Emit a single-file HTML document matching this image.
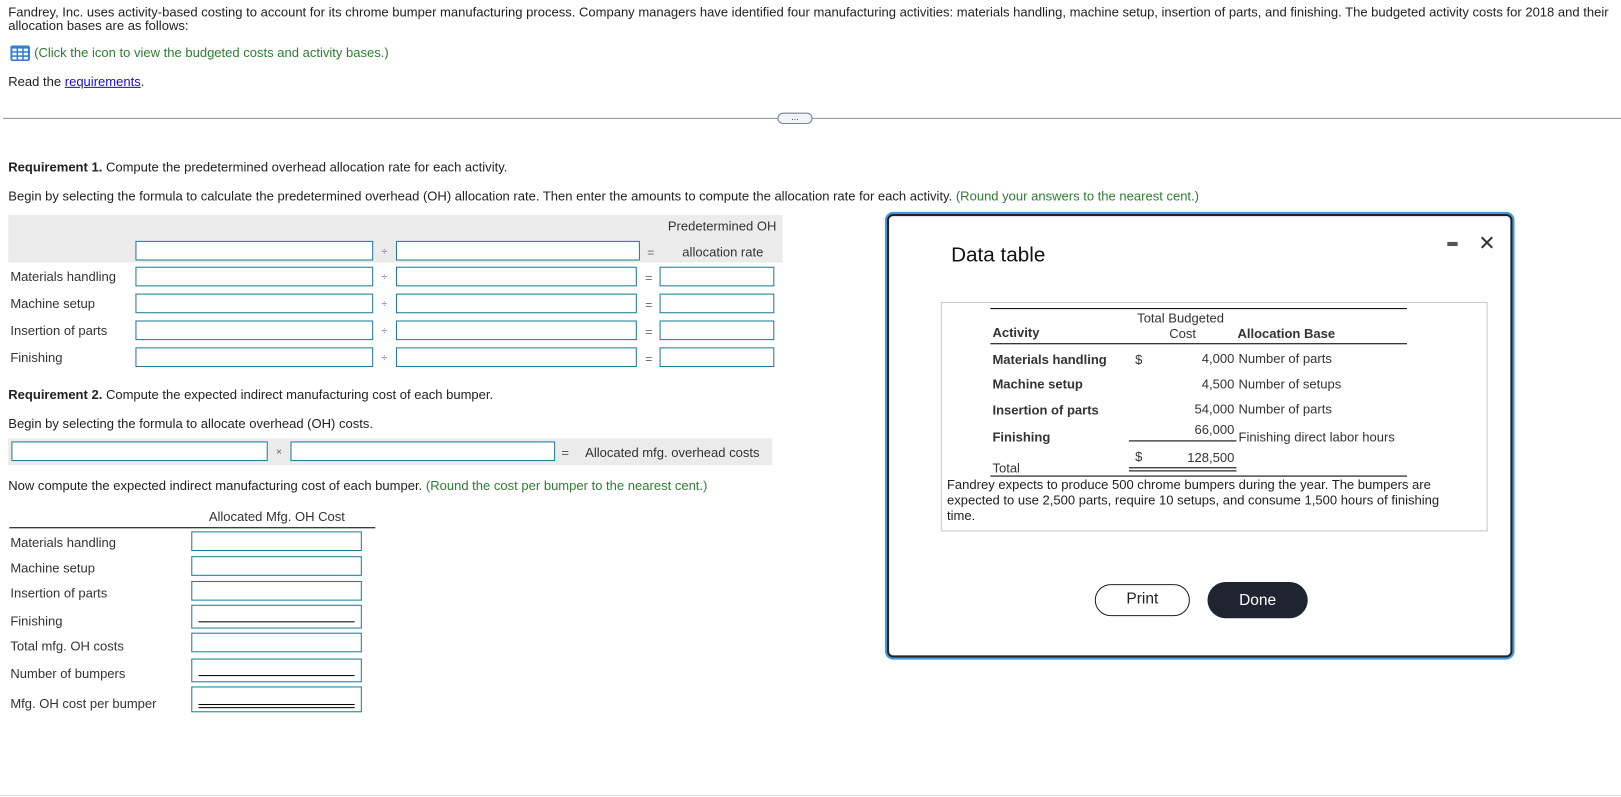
<!DOCTYPE html>
<html><head><meta charset="utf-8"><style>
*{margin:0;padding:0;box-sizing:border-box}
body{width:1621px;height:797px;background:#fff;font-family:"Liberation Sans",Arial,sans-serif;font-size:12.6px;color:#222;position:relative;overflow:hidden}
#w{position:absolute;left:0;top:0;width:1568px;height:771px;transform:scale(1.0338);transform-origin:0 0}
.a{position:absolute;white-space:nowrap}
.in{position:absolute;border:1px solid #1e7a99;background:#fff;height:19px}
.g{color:#2e7d32}
.lbl{position:absolute;color:#333;font-size:12.6px}
.op{position:absolute;color:#666;font-size:10px}
.uline{position:absolute;left:6px;right:6px;bottom:5px;border-top:1px solid #000}
</style></head><body><div id="w">
<div class="a" style="left:8px;top:6px;line-height:13px">Fandrey, Inc. uses activity-based costing to account for its chrome bumper manufacturing process. Company managers have identified four manufacturing activities: materials handling, machine setup, insertion of parts, and finishing. The budgeted activity costs for 2018 and their<br>allocation bases are as follows:</div>
<svg class="a" style="left:10px;top:44px" width="19" height="15" viewBox="0 0 19 15"><rect x="0" y="0" width="19" height="15" rx="2" fill="#2f7fd4"/><g fill="#fff"><rect x="2" y="3" width="4" height="2.5"/><rect x="7.5" y="3" width="4" height="2.5"/><rect x="13" y="3" width="4" height="2.5"/><rect x="2" y="7" width="4" height="2.5"/><rect x="7.5" y="7" width="4" height="2.5"/><rect x="13" y="7" width="4" height="2.5"/><rect x="2" y="11" width="4" height="2.5"/><rect x="7.5" y="11" width="4" height="2.5"/><rect x="13" y="11" width="4" height="2.5"/></g></svg>
<div class="a g" style="left:33px;top:44px">(Click the icon to view the budgeted costs and activity bases.)</div>
<div class="a" style="left:8px;top:72px">Read the <span style="color:#1a0dcc;text-decoration:underline">requirements</span>.</div>
<div class="a" style="left:3px;top:114px;width:1615px;border-top:1px solid #8a93a8"></div>
<div class="a" style="left:752px;top:109px;width:34px;height:11px;border:1px solid #7a8499;border-radius:6px;background:#f3f4f7;font-size:9px;line-height:6px;text-align:center;color:#444">...</div>

<div class="a" style="left:8px;top:155px"><b>Requirement 1.</b> Compute the predetermined overhead allocation rate for each activity.</div>
<div class="a" style="left:8px;top:183px">Begin by selecting the formula to calculate the predetermined overhead (OH) allocation rate. Then enter the amounts to compute the allocation rate for each activity. <span class="g">(Round your answers to the nearest cent.)</span></div>

<div class="a" style="left:8px;top:208px;width:749px;height:46px;background:#ebebeb"></div>
<div class="a" style="left:646px;top:212px;color:#333">Predetermined OH</div>
<div class="a" style="left:660px;top:237px;color:#333">allocation rate</div>
<div class="in" style="left:131px;top:233px;width:230px"></div><div class="op" style="left:369px;top:238px">÷</div>
<div class="in" style="left:383px;top:233px;width:236px"></div><div class="op" style="left:626px;top:237px;font-size:12px">=</div>

<div class="lbl" style="left:10px;top:261px">Materials handling</div>
<div class="lbl" style="left:10px;top:287px">Machine setup</div>
<div class="lbl" style="left:10px;top:313px">Insertion of parts</div>
<div class="lbl" style="left:10px;top:339px">Finishing</div>
<div class="in" style="left:131px;top:258px;width:230px"></div><div class="in" style="left:383px;top:258px;width:233px"></div><div class="in" style="left:638px;top:258px;width:111px"></div>
<div class="in" style="left:131px;top:284px;width:230px"></div><div class="in" style="left:383px;top:284px;width:233px"></div><div class="in" style="left:638px;top:284px;width:111px"></div>
<div class="in" style="left:131px;top:310px;width:230px"></div><div class="in" style="left:383px;top:310px;width:233px"></div><div class="in" style="left:638px;top:310px;width:111px"></div>
<div class="in" style="left:131px;top:336px;width:230px"></div><div class="in" style="left:383px;top:336px;width:233px"></div><div class="in" style="left:638px;top:336px;width:111px"></div>
<div class="op" style="left:369px;top:263px">÷</div><div class="op" style="left:369px;top:289px">÷</div><div class="op" style="left:369px;top:315px">÷</div><div class="op" style="left:369px;top:341px">÷</div>
<div class="op" style="left:624px;top:262px;font-size:12px">=</div><div class="op" style="left:624px;top:288px;font-size:12px">=</div><div class="op" style="left:624px;top:314px;font-size:12px">=</div><div class="op" style="left:624px;top:340px;font-size:12px">=</div>

<div class="a" style="left:8px;top:375px"><b>Requirement 2.</b> Compute the expected indirect manufacturing cost of each bumper.</div>
<div class="a" style="left:8px;top:403px">Begin by selecting the formula to allocate overhead (OH) costs.</div>
<div class="a" style="left:8px;top:424px;width:739px;height:26px;background:#ebebeb"></div>
<div class="in" style="left:11px;top:427px;width:248px"></div><div class="op" style="left:267px;top:432px">×</div>
<div class="in" style="left:281px;top:427px;width:256px"></div>
<div class="a" style="left:543px;top:431px;color:#555">=</div>
<div class="a" style="left:566px;top:431px;color:#333">Allocated mfg. overhead costs</div>

<div class="a" style="left:8px;top:463px">Now compute the expected indirect manufacturing cost of each bumper. <span class="g">(Round the cost per bumper to the nearest cent.)</span></div>
<div class="a" style="left:202px;top:493px;color:#333">Allocated Mfg. OH Cost</div>
<div class="a" style="left:9px;top:510px;width:354px;border-top:1px solid #000"></div>
<div class="lbl" style="left:10px;top:518px">Materials handling</div>
<div class="lbl" style="left:10px;top:543px">Machine setup</div>
<div class="lbl" style="left:10px;top:567px">Insertion of parts</div>
<div class="lbl" style="left:10px;top:594px">Finishing</div>
<div class="lbl" style="left:10px;top:618px">Total mfg. OH costs</div>
<div class="lbl" style="left:10px;top:645px">Number of bumpers</div>
<div class="lbl" style="left:10px;top:674px">Mfg. OH cost per bumper</div>
<div class="in" style="left:185px;top:514px;width:165px"></div>
<div class="in" style="left:185px;top:538px;width:165px"></div>
<div class="in" style="left:185px;top:562px;width:165px"></div>
<div class="in" style="left:185px;top:585px;width:165px;height:23px"><div class="uline"></div></div>
<div class="in" style="left:185px;top:612px;width:165px"></div>
<div class="in" style="left:185px;top:637px;width:165px;height:23px"><div class="uline"></div></div>
<div class="in" style="left:185px;top:664px;width:165px;height:25px"><div class="uline" style="bottom:6px"></div><div class="uline" style="bottom:3px"></div></div>

<div class="a" style="left:0;top:769px;width:1621px;border-top:1px solid #e0e0e0"></div>

<!-- dialog -->
<div class="a" style="left:858px;top:207px;width:605px;height:429px;border:2px solid #222;border-radius:6px;box-shadow:0 0 0 2px #3b9be0;background:#fff"></div>
<div class="a" style="left:920px;top:236px;font-size:20px;color:#111">Data table</div>
<div class="a" style="left:1400px;top:234px;width:10px;height:4px;background:#555"></div>
<div class="a" style="left:1430px;top:223px;font-size:20px;color:#333">✕</div>
<div class="a" style="left:910px;top:292px;width:529px;height:222px;border:1px solid #c8c8c8"></div>
<div class="a" style="left:958px;top:298px;width:403px;border-top:1px solid #000"></div>
<div class="a" style="left:1100px;top:301px;color:#333">Total Budgeted</div>
<div class="a" style="left:1131px;top:316px;color:#333">Cost</div>
<div class="a" style="left:960px;top:315px;font-weight:bold;color:#333">Activity</div>
<div class="a" style="left:1197px;top:316px;font-weight:bold;color:#333">Allocation Base</div>
<div class="a" style="left:958px;top:332px;width:403px;border-top:1px solid #000"></div>
<div class="a" style="left:960px;top:341px;font-weight:bold;color:#333">Materials handling</div>
<div class="a" style="left:960px;top:365px;font-weight:bold;color:#333">Machine setup</div>
<div class="a" style="left:960px;top:390px;font-weight:bold;color:#333">Insertion of parts</div>
<div class="a" style="left:960px;top:416px;font-weight:bold;color:#333">Finishing</div>
<div class="a" style="left:960px;top:446px;color:#333">Total</div>
<div class="a" style="left:1098px;top:341px;color:#333">$</div>
<div class="a" style="left:1098px;top:435px;color:#333">$</div>
<div class="a" style="left:1194px;top:340px;color:#333;transform:translateX(-100%)">4,000</div>
<div class="a" style="left:1194px;top:365px;color:#333;transform:translateX(-100%)">4,500</div>
<div class="a" style="left:1194px;top:389px;color:#333;transform:translateX(-100%)">54,000</div>
<div class="a" style="left:1194px;top:409px;color:#333;transform:translateX(-100%)">66,000</div>
<div class="a" style="left:1194px;top:436px;color:#333;transform:translateX(-100%)">128,500</div>
<div class="a" style="left:1198px;top:340px;color:#333">Number of parts</div>
<div class="a" style="left:1198px;top:365px;color:#333">Number of setups</div>
<div class="a" style="left:1198px;top:389px;color:#333">Number of parts</div>
<div class="a" style="left:1198px;top:416px;color:#333">Finishing direct labor hours</div>
<div class="a" style="left:1092px;top:426px;width:104px;border-top:1px solid #000"></div>
<div class="a" style="left:1092px;top:452px;width:104px;border-top:1px solid #000"></div>
<div class="a" style="left:1092px;top:455px;width:104px;border-top:1px solid #000"></div>
<div class="a" style="left:958px;top:460px;width:403px;border-top:1px solid #000"></div>
<div class="a" style="left:916px;top:462px;line-height:15px;color:#222;white-space:normal;width:490px">Fandrey expects to produce 500 chrome bumpers during the year. The bumpers are expected to use 2,500 parts, require 10 setups, and consume 1,500 hours of finishing time.</div>
<div class="a" style="left:1059px;top:565px;width:92px;height:31px;border:1.5px solid #222;border-radius:16px;text-align:center;line-height:28px;font-size:15px;color:#222">Print</div>
<div class="a" style="left:1168px;top:563px;width:97px;height:35px;background:#1e2530;border-radius:18px;text-align:center;line-height:35px;font-size:15px;color:#fff">Done</div>
</div></body></html>
